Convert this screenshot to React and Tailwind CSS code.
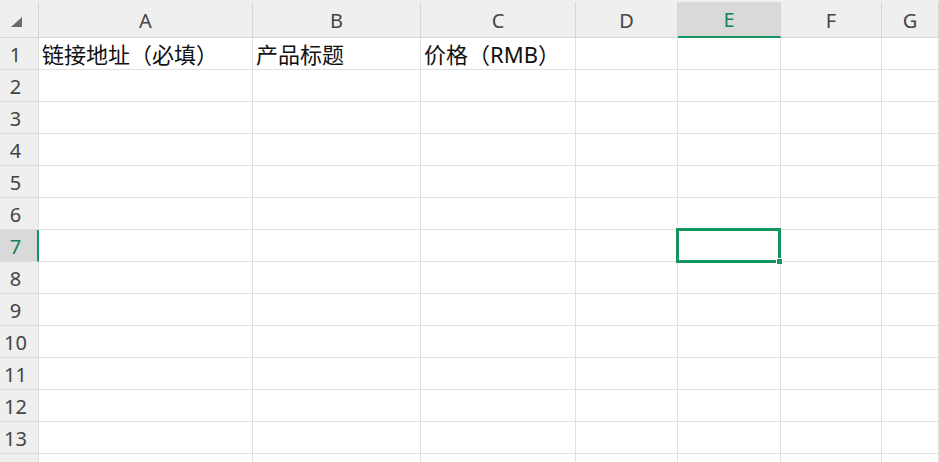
import React from "react";

const columns = [
  { key: "A", width: "w-[214px]" },
  { key: "B", width: "w-[168px]" },
  { key: "C", width: "w-[155px]" },
  { key: "D", width: "w-[102px]" },
  { key: "E", width: "w-[103px]" },
  { key: "F", width: "w-[101px]" },
  { key: "G", width: "flex-1" },
];

const firstRow = {
  A: "链接地址（必填）",
  B: "产品标题",
  C: "价格（RMB）",
};

const rows = Array.from({ length: 13 }, (_, i) => i + 1);
const activeCol = "E";
const activeRow = 7;

const uiFont = { fontFamily: '"Noto Sans", "Open Sans", sans-serif' };
const cellFont = {
  fontFamily: '"Noto Sans", "Noto Sans CJK SC", sans-serif',
};

const App = () => {
  return (
    <div className="relative w-[939px] h-[462px] overflow-hidden bg-white select-none">
      {/* column headers */}
      <div className="flex h-[38px] bg-[#efefef]" style={uiFont}>
        <div className="w-[39px] mt-[2px] h-[36px] border-r border-b border-[#d6d6d6] relative">
          <svg
            className="absolute left-[10px] top-[13px]"
            width="13"
            height="13"
            viewBox="0 0 13 13"
          >
            <polygon points="1,12 12,12 12,2" fill="#6b6b6b" />
          </svg>
        </div>
        {columns.map((c) => {
          const active = c.key === activeCol;
          return (
            <div
              key={c.key}
              className={
                active
                  ? `${c.width} mt-[2px] h-[36px] border-r border-[#d6d6d6] border-b-2 border-b-[#13955f] bg-[#d9d9d9] text-[#13855a] flex items-center justify-center text-[20px] pt-[2px]`
                  : `${c.width} mt-[2px] h-[36px] border-r border-b border-[#d6d6d6] text-[#444] flex items-center justify-center text-[20px] pt-[3px] shrink-0`
              }
            >
              {c.key}
            </div>
          );
        })}
      </div>

      {/* grid rows */}
      {rows.map((r) => {
        const active = r === activeRow;
        return (
          <div key={r} className="flex h-[32px]">
            <div
              className={
                active
                  ? "w-[39px] shrink-0 bg-[#d9d9d9] border-b border-[#dcdcdc] border-r-2 border-r-[#13955f] text-[#13855a] flex items-center justify-center pr-[6px] pt-[2px] text-[20px]"
                  : "w-[39px] shrink-0 bg-[#efefef] border-r border-b border-[#dcdcdc] text-[#444] flex items-center justify-center pr-[7px] pt-[2px] text-[20px]"
              }
              style={uiFont}
            >
              {r}
            </div>
            {columns.map((c) => (
              <div
                key={c.key}
                className={`${c.width} shrink-0 border-r border-b border-[#e1e1e1] flex items-end pl-[3px] pb-[1px] text-[22px] leading-[28px] text-[#111] whitespace-nowrap overflow-visible`}
                style={cellFont}
              >
                {r === 1 ? firstRow[c.key] : null}
              </div>
            ))}
          </div>
        );
      })}

      {/* partially visible row below the fold */}
      <div className="flex h-[32px]">
        <div className="w-[39px] shrink-0 bg-[#efefef] border-r border-[#dcdcdc]" />
        {columns.map((c) => (
          <div key={c.key} className={`${c.width} shrink-0 border-r border-[#e1e1e1]`} />
        ))}
      </div>

      {/* active cell outline with fill handle */}
      <div className="absolute left-[676px] top-[228px] w-[105px] h-[35px] border-[3px] border-[#13955f] pointer-events-none">
        <div className="absolute right-[-5px] bottom-[-5px] w-[7px] h-[7px] bg-[#13955f] border border-white" />
      </div>
    </div>
  );
};

export default App;
